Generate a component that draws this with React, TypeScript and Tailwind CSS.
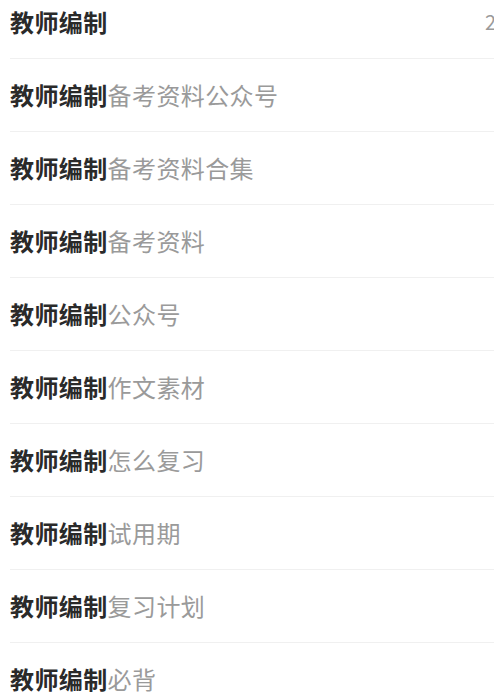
import React from "react";

const items = [
  "",
  "备考资料公众号",
  "备考资料合集",
  "备考资料",
  "公众号",
  "作文素材",
  "怎么复习",
  "试用期",
  "复习计划",
  "必背",
];

export default function App() {
  return (
    <div
      className="w-[494px] h-[697px] overflow-hidden bg-white"
      style={{ fontFamily: '"Noto Sans CJK SC", "Noto Sans", sans-serif' }}
    >
      <div className="-mt-[14px] pl-[10px]">
        {items.map((s, i) => (
          <div
            key={i}
            className="flex items-center justify-between h-[73px] border-b border-[#f0f0f0] w-[486px]"
          >
            <div className="text-[24px] leading-none tracking-[0.4px]">
              <span className="font-bold text-[#2a2a2a]">教师编制</span>
              <span className="text-[#9a9a9a]">{s}</span>
            </div>
            {i === 0 && (
              <span className="text-[20px] leading-none text-[#9a9a9a]">2</span>
            )}
          </div>
        ))}
      </div>
    </div>
  );
}
